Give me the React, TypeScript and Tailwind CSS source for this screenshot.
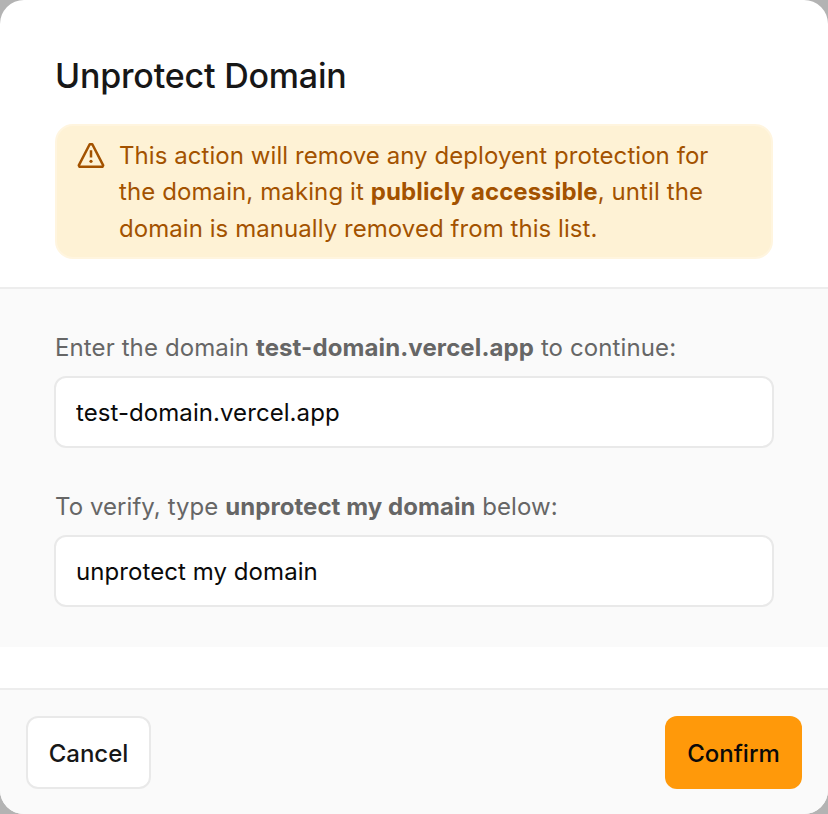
import type { ReactNode } from "react";

function WarningIcon() {
  return (
    <svg
      className="mt-[3px] h-7 w-7 shrink-0"
      viewBox="0 0 28 28"
      fill="none"
      stroke="currentColor"
      strokeWidth="2.5"
      strokeLinejoin="round"
    >
      <path d="M12.7 3.2h2.6L26.2 24.4l-.8 1.4H2.6l-.8-1.4z" />
      <path d="M14 9.2v7.3" />
      <circle cx="14" cy="20.3" r="1.6" fill="currentColor" stroke="none" />
    </svg>
  );
}

function Field({ label, value, id }: { label: ReactNode; value: string; id: string }) {
  return (
    <div>
      <label htmlFor={id} className="block h-9 text-[24px] leading-9 text-[#666]">
        {label}
      </label>
      <input
        id={id}
        defaultValue={value}
        className="mt-[10px] -ml-[1px] block h-[72px] w-[720px] rounded-xl border-2 border-[#e9e9e9] bg-white px-5 pt-px text-[24px] tracking-[0.07px] text-[#0a0a0a] outline-none"
      />
    </div>
  );
}

export default function App() {
  return (
    <div className="h-[814px] w-[828px] bg-[#b3b3b3] font-['Inter',sans-serif]">
      <div className="flex h-full flex-col overflow-hidden rounded-[24px] bg-white">
        <header className="h-[287px] px-[55px] pt-[52px]">
          <h1 className="h-12 text-[34px] leading-12 font-medium tracking-[-0.2px] text-[#171717]">Unprotect Domain</h1>
          <div className="mt-[24px] flex h-[135px] w-[718px] gap-[14px] rounded-[18px] border-2 border-[#fff5df] bg-[#fef2d5] px-5 pt-[12px] text-[#a35200]">
            <WarningIcon />
            <p className="text-[24px] leading-[36.3px] tracking-[0.06px] whitespace-nowrap">
              This action will remove any deployent protection for
              <br />
              <span className="tracking-[0.1px]">
                the domain, making it <b>publicly accessible</b>, until the
              </span>
              <br />
              domain is manually removed from this list.
            </p>
          </div>
        </header>
        <section className="flex h-[360px] flex-col gap-[41px] border-t-2 border-[#ededed] bg-[#fafafa] px-[55px] pt-[41px]">
          <Field
            id="domain"
            label={
              <span className="tracking-[0.11px]">
                Enter the domain <b>test-domain.vercel.app</b> to continue:
              </span>
            }
            value="test-domain.vercel.app"
          />
          <Field
            id="verify"
            label={
              <span className="tracking-[0.06px]">
                To verify, type <b>unprotect my domain</b> below:
              </span>
            }
            value="unprotect my domain"
          />
        </section>
        <footer className="mt-auto flex h-[126px] items-start justify-between border-t-2 border-[#ededed] bg-[#fafafa] px-[26px] pt-[26px]">
          <button className="h-[73px] w-[125px] rounded-xl border-2 border-[#e9e9e9] bg-white pt-0.5 text-[24px] font-medium text-[#171717]">
            Cancel
          </button>
          <button className="h-[73px] w-[137px] rounded-xl bg-[#ff990a] pt-0.5 text-[24px] font-medium text-[#0a0a0a]">
            Confirm
          </button>
        </footer>
      </div>
    </div>
  );
}
